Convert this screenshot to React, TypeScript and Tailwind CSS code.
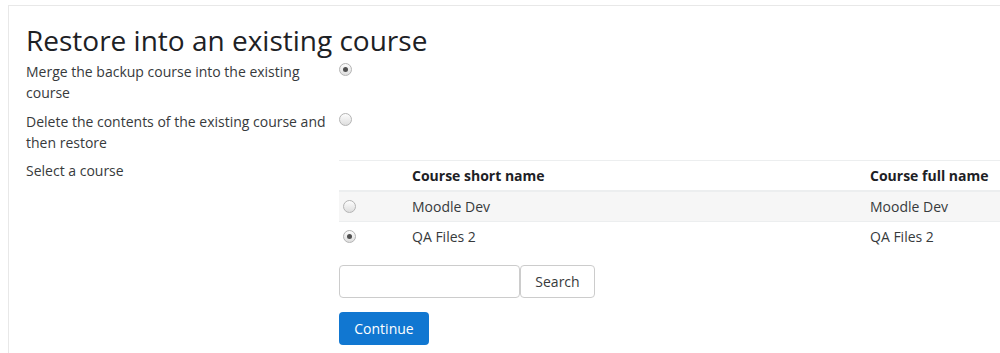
import React from 'react';

function Radio({ checked }: { checked?: boolean }) {
  return (
    <span className="inline-flex w-[13px] h-[13px] items-center justify-center rounded-full border border-[#b4b4b4] bg-gradient-to-b from-[#fdfdfd] to-[#dedede]">
      {checked && <span className="w-[5px] h-[5px] rounded-full bg-[#505050]" />}
    </span>
  );
}

const courses = [
  { short: 'Moodle Dev', full: 'Moodle Dev', checked: false },
  { short: 'QA Files 2', full: 'QA Files 2', checked: true },
];

export default function App() {
  return (
    <div className="w-[1000px] h-[353px] overflow-hidden bg-white font-['Open_Sans',sans-serif] text-[14px] leading-[21px] text-[#373a3c]">
      <div className="ml-[8px] mt-[5px] w-[1100px] h-[400px] border-l border-t border-[#e8e8e8] pl-[17px] pt-[17px]">
        <h2 className="text-[28px] leading-[34px] text-[#1d2125] font-normal mb-[3px]">
          Restore into an existing course
        </h2>

        {/* restore target options */}
        <div className="flex">
          <div className="w-[313px] pr-[8px] pt-[1px]">Merge the backup course into the existing course</div>
          <div className="flex pt-[3px]">
            <Radio checked />
          </div>
        </div>

        <div className="flex mt-[7px]">
          <div className="w-[313px] pr-[8px] pt-[1px]">Delete the contents of the existing course and then restore</div>
          <div className="flex pt-[3px]">
            <Radio />
          </div>
        </div>

        {/* course picker */}
        <div className="flex mt-[7px]">
          <div className="w-[313px]">Select a course</div>
          <div className="flex-1">
            <table className="w-[700px] border-collapse">
              <thead>
                <tr className="border-t border-[#eceeef] border-b-2 border-b-[#eceeef]">
                  <th className="w-[61px]" />
                  <th className="text-left font-bold text-[#1d2125] px-[12px] py-[4px] w-[458px]">Course short name</th>
                  <th className="text-left font-bold text-[#1d2125] px-[12px] py-[4px]">Course full name</th>
                </tr>
              </thead>
              <tbody>
                {courses.map((c, i) => (
                  <tr key={c.short} className={i === 0 ? 'bg-[#f6f6f6] border-b border-[#eceeef]' : ''}>
                    <td className="pl-[4px] py-[4px] align-middle">
                      <span className="flex">
                        <Radio checked={c.checked} />
                      </span>
                    </td>
                    <td className="px-[12px] py-[4px]">{c.short}</td>
                    <td className="px-[12px] py-[4px]">{c.full}</td>
                  </tr>
                ))}
              </tbody>
            </table>

            <div className="flex mt-[14px]">
              <input
                type="text"
                className="w-[181px] h-[33px] border border-[#cccccc] rounded-[4px] px-2 outline-none"
              />
              <button className="w-[75px] h-[33px] border border-[#cccccc] rounded-[4px] bg-white text-[#373a3c]">
                Search
              </button>
            </div>

            <button className="mt-[14px] w-[90px] h-[33px] rounded-[4px] bg-[#1177d1] text-white">
              Continue
            </button>
          </div>
        </div>
      </div>
    </div>
  );
}
